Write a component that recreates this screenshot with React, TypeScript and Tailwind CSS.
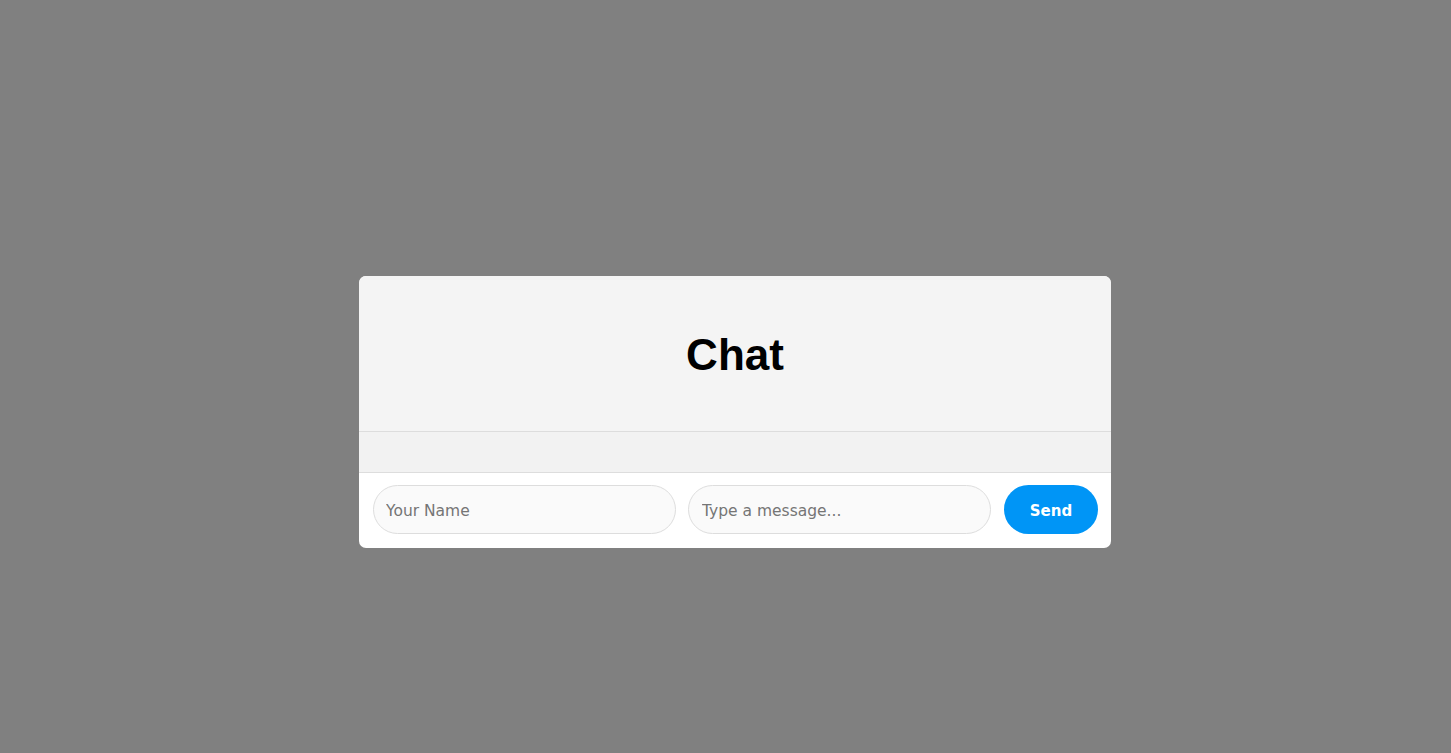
export default function App() {
  return (
    <div className="min-h-[753px] w-full bg-[#808080] pt-[276px] pl-[359px]">
      <div className="w-[752px] overflow-hidden rounded-[7px] bg-white">
        {/* header */}
        <div className="flex h-[156px] items-center justify-center border-b border-[#dddddd] bg-[#f4f4f4]">
          <h1 className="pt-[2px] font-['Liberation_Sans',Arial,sans-serif] text-[44px] font-bold leading-none text-black">
            Chat
          </h1>
        </div>

        {/* messages */}
        <div className="h-[41px] border-b border-[#dddddd] bg-[#f2f2f2]" />

        {/* input row */}
        <div className="flex items-center gap-3 pt-3 pb-[14px] pl-[14px] pr-[13px] font-['DejaVu_Sans',Verdana,sans-serif]">
          <input
            placeholder="Your Name"
            className="h-[49px] w-[303px] rounded-full border border-[#dddddd] bg-[#fafafa] pl-[12px] pr-3 pt-[3px] text-[15.5px] text-black outline-none placeholder:text-[#757575]"
          />
          <input
            placeholder="Type a message..."
            className="h-[49px] w-[303px] rounded-full border border-[#dddddd] bg-[#fafafa] pl-[13px] pr-3 pt-[3px] text-[15.5px] text-black outline-none placeholder:text-[#757575]"
          />
          <button className="ml-px h-[49px] flex-1 rounded-full bg-[#0095f6] pt-[3px] text-[15px] font-bold text-white">
            Send
          </button>
        </div>
      </div>
    </div>
  );
}
